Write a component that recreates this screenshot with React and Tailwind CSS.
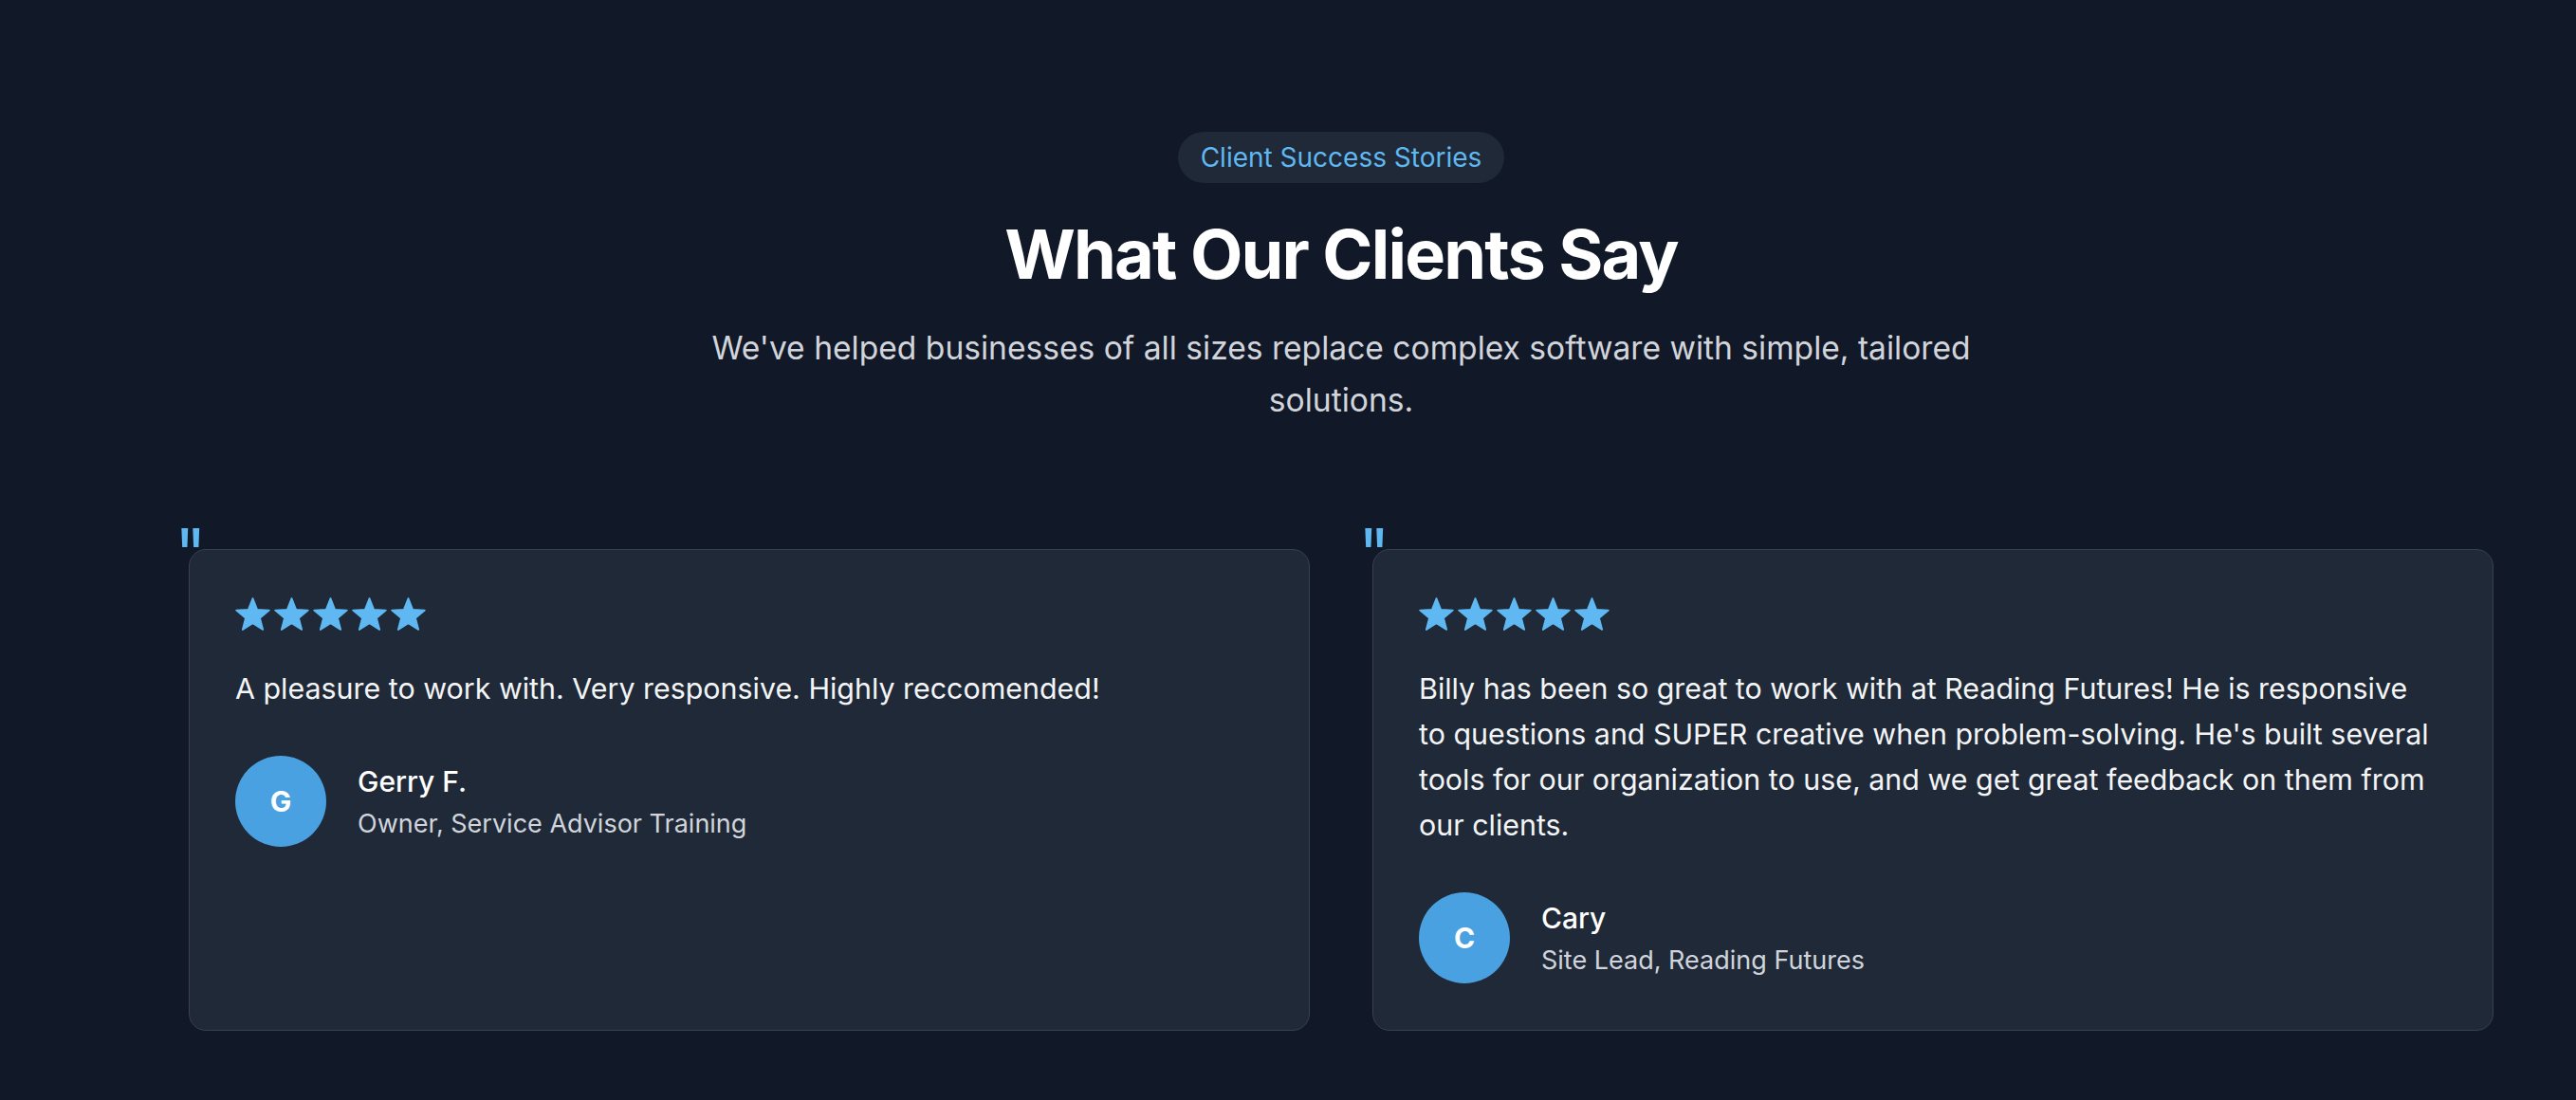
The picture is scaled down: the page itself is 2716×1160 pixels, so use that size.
const TESTIMONIALS = [
  {
    id: "gerry",
    quote: "A pleasure to work with. Very responsive. Highly reccomended!",
    name: "Gerry F.",
    role: "Owner, Service Advisor Training",
  },
  {
    id: "cary",
    quote:
      "Billy has been so great to work with at Reading Futures! He is responsive to questions and SUPER creative when problem-solving. He's built several tools for our organization to use, and we get great feedback on them from our clients.",
    name: "Cary",
    role: "Site Lead, Reading Futures",
  },
];

function Star() {
  return (
    <svg width="37" height="35" viewBox="-12.1 -12.7 24.2 23.1" className="shrink-0">
      <polygon
        points="0,-12 3.057,-4.207 11.413,-3.708 4.945,1.607 7.053,9.708 0,5.2 -7.053,9.708 -4.945,1.607 -11.413,-3.708 -3.057,-4.207"
        fill="#5fb8f2"
        stroke="#5fb8f2"
        strokeWidth="1.2"
        strokeLinejoin="round"
      />
    </svg>
  );
}

function TestimonialCard({ t }) {
  return (
    <div className="relative">
      {/* quote mark sits just above the card corner */}
      <span className="absolute -top-[32px] -left-[15px] text-[72px] leading-none text-[#5fb8f2] select-none">
        "
      </span>
      <div className="h-full bg-[#1f2937] border-[1.5px] border-[#374151] rounded-[18px] px-[48px] pt-[50px] pb-[49px]">
        <div className="flex gap-[4px]">
          {[0, 1, 2, 3, 4].map(i => <Star key={i} />)}
        </div>
        <p className="mt-[37px] pr-[8px] text-[30.4px] leading-[48px] text-[#f3f4f6]">{t.quote}</p>
        <div className="mt-[47px] flex items-center gap-[33px]">
          <div className="w-[96px] h-[96px] rounded-full bg-[#4aa1e2] flex items-center justify-center text-white text-[30px] font-bold">
            {t.name[0]}
          </div>
          <div className="mt-[2px]">
            <p className="text-[30px] leading-[42px] text-white font-medium">{t.name}</p>
            <p className="mt-[3px] text-[27px] leading-[42px] text-[#d1d5db]">{t.role}</p>
          </div>
        </div>
      </div>
    </div>
  );
}

export default function App() {
  return (
    <div
      className="min-h-screen bg-[#111827] pl-[112px] pt-[139px] pb-[76px] flex flex-col items-center"
      style={{ fontFamily: "Inter, 'Noto Sans', sans-serif" }}
    >
      <span className="px-[24px] py-[9px] rounded-full bg-[#1f2937] text-[#5fb8f2] text-[28px] leading-[36px]">
        Client Success Stories
      </span>
      <h2 className="mt-[39px] text-[72px] leading-none font-bold text-white tracking-tight">
        What Our Clients Say
      </h2>
      <p className="mt-[35px] max-w-[1400px] text-center text-[33.6px] leading-[55px] text-[#d1d5db]">
        We've helped businesses of all sizes replace complex software with simple, tailored solutions.
      </p>

      <div className="mt-[130px] w-[2430px] grid grid-cols-2 gap-[66px]">
        {TESTIMONIALS.map(t => <TestimonialCard key={t.id} t={t} />)}
      </div>
    </div>
  );
}
